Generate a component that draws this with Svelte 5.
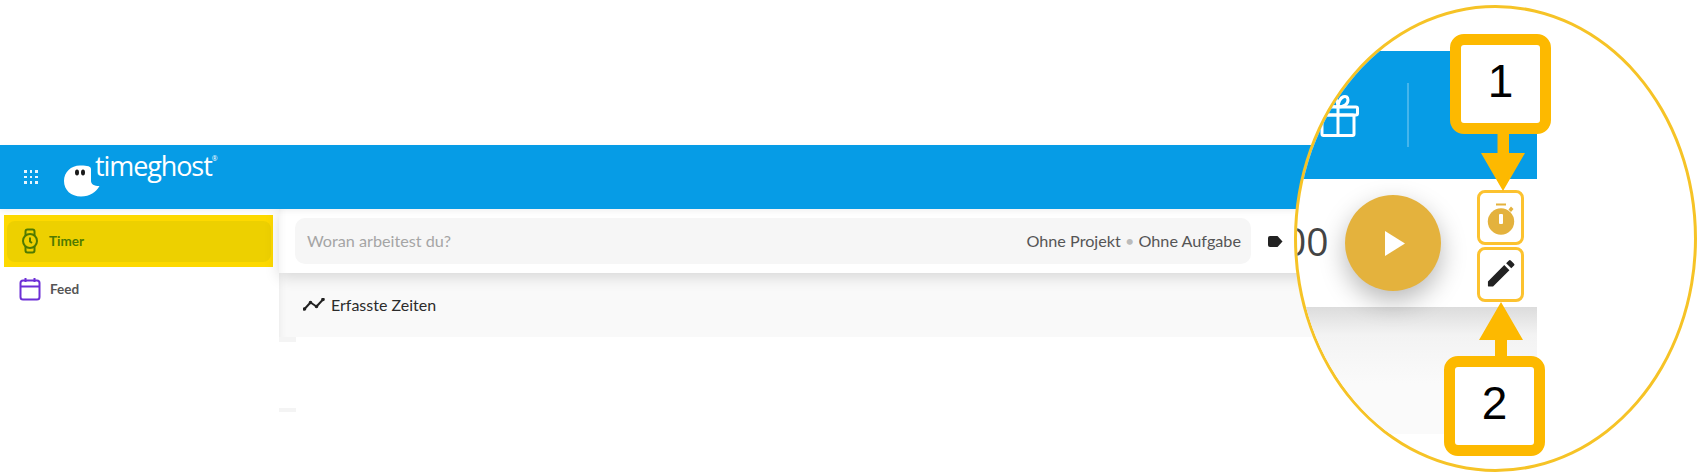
<script>
  const dots = Array.from({ length: 9 });
</script>

<div class="page">
  <header class="topnav">
    <div class="apps">
      {#each dots as _}
        <span class="dot"></span>
      {/each}
    </div>
    <svg class="ghost" viewBox="0 0 38 33" width="38" height="33">
      <path fill="#fff" d="M1 17C1 8 8 1.500 17 1.500C21 1.500 28 1.500 28 5V17C28 20 31 22 36.500 22C33 28 27 32.500 18 32.500C8 32.500 1 26 1 17Z" />
      <ellipse cx="14" cy="8.500" rx="2" ry="3" fill="#1a1a1a" />
      <ellipse cx="20" cy="8.500" rx="2" ry="3" fill="#1a1a1a" />
    </svg>
    <span class="brand">timeghost<sup>®</sup></span>
  </header>

  <div class="body">
    <aside class="sidebar">
      <div class="highlight">
        <a class="item active">
          <svg viewBox="0 0 18 26" width="18" height="26" fill="none" stroke="#4f7a00" stroke-width="2">
            <circle cx="9" cy="13" r="7" />
            <path d="M4.500 7.500V3.500Q4.500 1.500 6.500 1.500H11.500Q13.500 1.500 13.500 3.500V7.500M4.500 18.500V22.500Q4.500 24.500 6.500 24.500H11.500Q13.500 24.500 13.500 22.500V18.500M9 9.500V13.500L11 15" />
          </svg>
          Timer
        </a>
      </div>
      <a class="item">
        <svg viewBox="0 0 22 24" width="22" height="24" fill="none" stroke="#6d2fd6" stroke-width="2">
          <rect x="1.500" y="3.500" width="19" height="19" rx="2.500" />
          <path d="M1.500 9.500H20.500M6.500 1V5M15.500 1V5" />
        </svg>
        Feed
      </a>
    </aside>

    <main class="main">
      <div class="entry">
        <div class="search">
          <span class="placeholder">Woran arbeitest du?</span>
          <span class="meta">Ohne Projekt <i>•</i> Ohne Aufgabe</span>
        </div>
        <svg class="tag" viewBox="0 0 15 11" width="15" height="11">
          <path fill="#222" d="M2 0H9.500L14.500 5.500L9.500 11H2Q0 11 0 9V2Q0 0 2 0Z" />
        </svg>
      </div>
      <div class="tracked">
        <svg viewBox="0 0 22 13" width="22" height="13" fill="#222" stroke="#222" stroke-width="2" stroke-linejoin="round" stroke-linecap="round">
          <path fill="none" d="M1.500 11L7.500 4.500L13.500 8.500L20 1.500" />
          <circle cx="1.500" cy="11" r="0.800" />
          <circle cx="7.500" cy="4.500" r="0.800" />
          <circle cx="13.500" cy="8.500" r="0.800" />
          <circle cx="20" cy="1.500" r="0.800" />
        </svg>
        Erfasste Zeiten
      </div>
      <div class="list">
        <div class="gutter">
          <span class="stub first"></span>
          <span class="stub last"></span>
        </div>
        <div class="card"></div>
      </div>
    </main>
  </div>

  <!-- vergrösserter Ausschnitt -->
  <div class="lens">
    <div class="zoom-bar"></div>
    <div class="zoom-grey"></div>
    <svg class="gift" viewBox="0 0 42 44" width="42" height="44" fill="none" stroke="#fff" stroke-width="3" stroke-linejoin="round">
      <rect x="1.500" y="14" width="39" height="8" rx="1.500" />
      <rect x="5" y="22" width="32" height="20.500" rx="1.500" />
      <path d="M21 14V42.500M21 14C16 14 12 12 13 7C14 2 20 2 21 14C22 2 31 1 31 7C31 11 27 14 21 14" />
    </svg>
    <span class="zoom-rule"></span>
    <span class="digits">00</span>
    <div class="play">
      <svg viewBox="0 0 20 25" width="20" height="25"><path fill="#fff" d="M0 0L20 12.500L0 25Z" /></svg>
    </div>
    <div class="mode mode-timer">
      <svg viewBox="0 0 28 32" width="28" height="32">
        <circle cx="14" cy="18.500" r="13.200" fill="#e4b23d" />
        <path fill="#e4b23d" d="M9 0.500H19V2.500H9ZM24 3.500L26.500 6L24 9L21.500 6.500Z" />
        <rect x="12" y="11" width="4" height="10" rx="1" fill="#fff" />
      </svg>
    </div>
    <div class="mode mode-edit">
      <svg viewBox="0 0 30 30" width="28" height="28">
        <path fill="#222" d="M1 24L18.500 6.500L24 12L6.500 29.500L1.500 29.500Q1 29.500 1 29ZM20.500 4.500L23.500 1.500Q24.500 .5 25.500 1.500L29 5Q30 6 29 7L26 10Z" />
      </svg>
    </div>
    <div class="note note-one">1</div>
    <svg class="arrow arrow-one" viewBox="0 0 46 58" width="46" height="58">
      <path fill="#fdb900" d="M17.500 0H29V20H45L23 58L1 20H17.500Z" />
    </svg>
    <svg class="arrow arrow-two" viewBox="0 0 46 56" width="46" height="56">
      <path fill="#fdb900" d="M23 0L45 38H29V56H17V38H1Z" />
    </svg>
    <div class="note note-two">2</div>
  </div>
</div>

<style>
  :global(body) {
    background: #fff;
  }

  .page {
    position: relative;
    width: 1698px;
    height: 476px;
    padding-top: 145px;
    box-sizing: border-box;
    overflow: hidden;
    font-family: Lato, "Open Sans", sans-serif;
  }

  .topnav {
    position: relative;
    z-index: 1;
    display: flex;
    align-items: flex-start;
    width: 1400px;
    height: 64px;
    background: #069ce6;
    color: #fff;
    box-shadow: 0 2px 6px rgba(0, 0, 0, 0.06);
  }

  .apps {
    display: grid;
    grid-template-columns: repeat(3, 2.500px);
    gap: 3px;
    margin: 25px 0 0 24px;
  }

  .dot {
    width: 2.500px;
    height: 2.500px;
    background: #fff;
    opacity: 0.9;
  }

  .ghost {
    margin: 19px 0 0 25.500px;
  }

  .brand {
    margin: 3px 0 0 -6px;
    font-family: "Open Sans", sans-serif;
    font-size: 27px;
    font-weight: 500;
    letter-spacing: -1.100px;
    line-height: 36px;
  }

  .brand sup {
    font-size: 7px;
    vertical-align: 15px;
    line-height: 0;
  }

  .body {
    display: flex;
    width: 1400px;
  }

  .sidebar {
    width: 279px;
    flex: none;
    padding-top: 6px;
  }

  .highlight {
    margin-left: 4px;
    width: 269px;
    height: 52px;
    padding: 6px 2px 5px 3px;
    box-sizing: border-box;
    background: #fdd900;
  }

  .item {
    display: flex;
    align-items: center;
    gap: 9px;
    height: 41px;
    padding-left: 19px;
    font-size: 13.500px;
    font-weight: 700;
    color: #555;
  }

  .highlight .item {
    height: 41px;
    padding-left: 14px;
    padding-bottom: 2px;
    box-sizing: border-box;
    gap: 10px;
    border-radius: 8px;
    background: #edd000;
    color: #4f7a00;
  }

  .sidebar > .item {
    margin-top: 1px;
    height: 42px;
  }

  .main {
    flex: 1;
    min-width: 0;
  }

  .entry {
    display: flex;
    align-items: center;
    height: 64px;
    padding-left: 16px;
    background: #fff;
    position: relative;
    box-shadow: 0 4px 14px rgba(0, 0, 0, 0.14), inset 8px 0 8px -8px rgba(0, 0, 0, 0.08);
  }

  .search {
    display: flex;
    justify-content: space-between;
    align-items: center;
    width: 956px;
    height: 46px;
    padding: 0 10px 2px 12px;
    box-sizing: border-box;
    border-radius: 10px;
    background: #f6f6f6;
    font-size: 16.200px;
  }

  .placeholder {
    color: #a5a5a5;
  }

  .meta {
    color: #555;
  }

  .meta i {
    font-style: normal;
    color: #bbb;
  }

  .tag {
    margin-left: 17px;
  }

  .tracked {
    display: flex;
    align-items: center;
    gap: 6px;
    height: 64px;
    padding-left: 24px;
    padding-bottom: 2px;
    box-sizing: border-box;
    background: #f9f9f9;
    font-size: 16px;
    color: #2b2b2b;
    box-shadow: inset 8px 0 8px -8px rgba(0, 0, 0, 0.08);
  }

  .list {
    display: flex;
    height: 75px;
  }

  .gutter {
    display: flex;
    flex-direction: column;
    justify-content: space-between;
    width: 17px;
    flex: none;
  }

  .stub {
    display: block;
    background: #f4f4f4;
  }

  .first {
    height: 5px;
  }

  .last {
    height: 4px;
  }

  .card {
    flex: 1;
    background: #fff;
    border-radius: 6px 0 0 0;
  }

  .lens {
    position: absolute;
    z-index: 2;
    left: 1294px;
    top: 5px;
    width: 403px;
    height: 467px;
    box-sizing: border-box;
    border: 3.500px solid #f6c326;
    border-radius: 50%;
    background: #fff;
    overflow: hidden;
  }

  .zoom-bar {
    position: absolute;
    left: 0;
    top: 43px;
    width: 240px;
    height: 128px;
    background: #069ce6;
  }

  .zoom-grey {
    position: absolute;
    left: 0;
    top: 299px;
    width: 240px;
    height: 127px;
    background: linear-gradient(#dcdcdc, #f3f3f3 22%, #fafafa 60%);
  }

  .gift {
    position: absolute;
    left: 20px;
    top: 85px;
  }

  .zoom-rule {
    position: absolute;
    left: 110px;
    top: 75px;
    width: 2px;
    height: 64px;
    background: rgba(255, 255, 255, 0.25);
  }

  .digits {
    position: absolute;
    left: -13px;
    top: 208px;
    font-family: "Open Sans", sans-serif;
    font-size: 39px;
    line-height: 50px;
    color: #444;
  }

  .play {
    position: absolute;
    left: 48px;
    top: 187px;
    display: flex;
    align-items: center;
    justify-content: center;
    width: 96px;
    height: 96px;
    padding-left: 4px;
    box-sizing: border-box;
    border-radius: 50%;
    background: #e4b23d;
    box-shadow: 0 10px 26px rgba(0, 0, 0, 0.28);
  }

  .mode {
    position: absolute;
    left: 180px;
    display: flex;
    align-items: center;
    justify-content: center;
    width: 47px;
    height: 55px;
    box-sizing: border-box;
    border: 3px solid #fcc22f;
    border-radius: 8px;
    background: #fff;
  }

  .mode-timer {
    top: 182px;
    padding-top: 2px;
  }

  .mode-edit {
    top: 239px;
    padding-bottom: 3px;
  }

  .note {
    position: absolute;
    display: flex;
    align-items: center;
    justify-content: center;
    width: 101px;
    height: 100px;
    padding-bottom: 6px;
    box-sizing: border-box;
    border: 11px solid #fdb900;
    border-radius: 14px;
    background: #fff;
    font-family: "Liberation Sans", sans-serif;
    font-size: 46px;
    color: #000;
  }

  .note-one {
    left: 153px;
    top: 26px;
  }

  .note-two {
    left: 147px;
    top: 348px;
  }

  .arrow {
    position: absolute;
  }

  .arrow-one {
    left: 183px;
    top: 125px;
  }

  .arrow-two {
    left: 181px;
    top: 294px;
  }
</style>
